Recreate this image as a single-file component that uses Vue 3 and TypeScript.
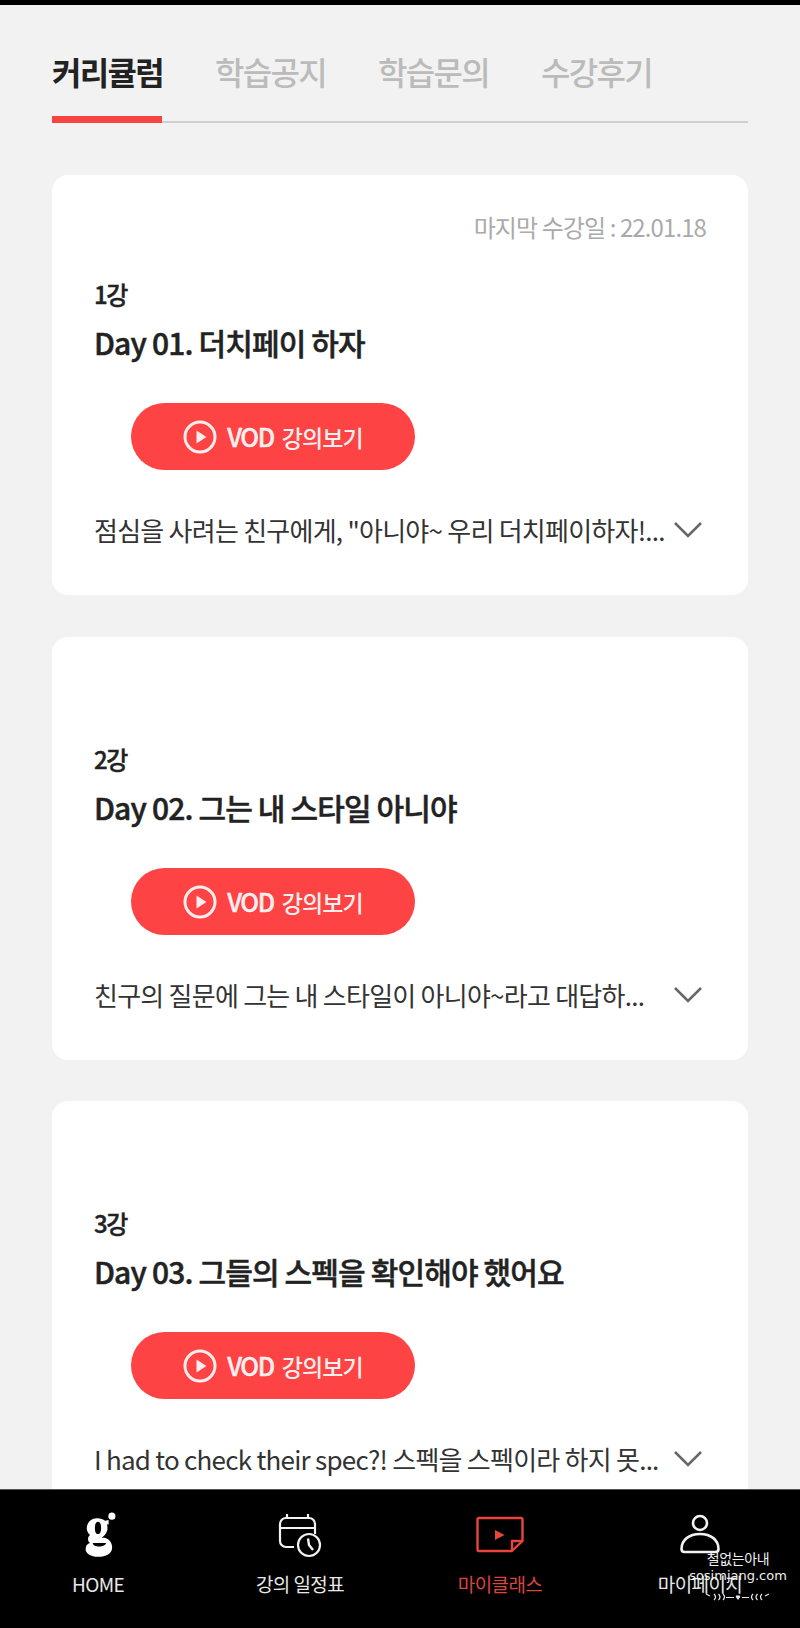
<script setup lang="ts">
import { ref } from 'vue';

interface Lesson {
  no: string;
  title: string;
  desc: string;
  lastDate?: string;
}

const tabs = ['커리큘럼', '학습공지', '학습문의', '수강후기'];
const currentTab = ref<number>(0);

const lessons: Lesson[] = [
  { no: '1강', title: 'Day 01. 더치페이 하자', desc: '점심을 사려는 친구에게, "아니야~ 우리 더치페이하자!...', lastDate: '마지막 수강일 : 22.01.18' },
  { no: '2강', title: 'Day 02. 그는 내 스타일 아니야', desc: '친구의 질문에 그는 내 스타일이 아니야~라고 대답하...' },
  { no: '3강', title: 'Day 03. 그들의 스펙을 확인해야 했어요', desc: 'I had to check their spec?! 스펙을 스펙이라 하지 못...' },
];
</script>

<template>
  <div class="page">
    <div class="topbar"></div>

    <nav class="tabs">
      <button
        v-for="(tab, index) in tabs"
        :key="tab"
        :class="{ tab: true, 'is-current': index === currentTab }"
        @click="currentTab = index"
      >{{ tab }}</button>
    </nav>

    <main class="list">
      <article v-for="lesson in lessons" :key="lesson.no" class="card">
        <p class="last-date">{{ lesson.lastDate }}</p>
        <p class="no">{{ lesson.no }}</p>
        <h2 class="title">{{ lesson.title }}</h2>
        <button class="vod">
          <svg width="34" height="34" viewBox="0 0 34 34" fill="none">
            <circle cx="17" cy="17" r="15" stroke="#fff" stroke-opacity="0.9" stroke-width="3" />
            <path d="M13.500 10.500 23.500 17l-10 6.500z" fill="#fff" fill-opacity="0.9" />
          </svg>
          <span class="vod-text"><b>VOD</b>강의보기</span>
        </button>
        <div class="desc-row">
          <p class="desc">{{ lesson.desc }}</p>
          <svg class="chevron" width="30" height="18" viewBox="0 0 30 18" fill="none">
            <path d="M2 2 15 15 28 2" stroke="#666" stroke-width="2.500" />
          </svg>
        </div>
      </article>
    </main>

    <footer class="bottom-nav">
      <div class="nav-item">
        <div class="nav-icon">
          <svg width="46" height="46" viewBox="3 8 46 52">
            <path
              fill="#fff"
              fill-rule="evenodd"
              d="M25 15C29 15 32 16 34 18L38 17V22H36C37 24 37 28 36 30C35 33 32 36 30 37H33C39 38 42 43 42 48C42 55 35 58.500 26 58.500C18 58.500 12 55 12 50C12 46 14 44 17 43C14 41 14 36 17 34C14.500 32 13.300 29 13.300 26.700C13.300 20 18 15 25 15ZM26 19C23.500 19 22.500 22 22.500 26S23.500 33 26 33S29.500 30 29.500 26S28.500 19 26 19ZM20 43H35C35 45.500 31 47 27.500 47C23.500 47 20.500 46 20 43Z"
            />
            <circle cx="41.700" cy="12.700" r="4" fill="#fff" />
          </svg>
        </div>
        <span>HOME</span>
      </div>
      <div class="nav-item">
        <div class="nav-icon">
          <svg width="48" height="46" viewBox="0 0 48 46" fill="none" stroke="#f2f2f2" stroke-width="2.200">
            <path d="M18 35H10a6 6 0 0 1-6-6V12a6 6 0 0 1 6-6h23a6 6 0 0 1 6 6v10" />
            <path d="M4 16h35M11 2v4M32 2v4" />
            <circle cx="33" cy="33" r="11" />
            <path d="M32 26.500 33 33 37 38" stroke-width="2.400" />
          </svg>
        </div>
        <span>강의 일정표</span>
      </div>
      <div class="nav-item is-current">
        <div class="nav-icon">
          <svg width="48" height="46" viewBox="0 0 48 46" fill="none" stroke="#e8453f" stroke-width="2.400" stroke-linejoin="round">
            <path d="M3 6h42a1.500 1.500 0 0 1 1.500 1.500V29L36 39H3a1.500 1.500 0 0 1-1.500-1.500V7.500A1.500 1.500 0 0 1 3 6z" />
            <path d="M36 39V29h10.500" />
            <path d="M19 18 28.500 23 19 28z" fill="#e8453f" stroke="none" />
          </svg>
        </div>
        <span>마이클래스</span>
      </div>
      <div class="nav-item">
        <div class="nav-icon">
          <svg width="46" height="44" viewBox="0 0 46 44" fill="none" stroke="#f2f2f2" stroke-width="2.600">
            <circle cx="23" cy="10" r="7" />
            <path d="M4.500 36C4.500 27 12 21 23 21s18.500 6 18.500 15c0 2-1 3-3 3H7.500c-2 0-3-1-3-3z" />
          </svg>
        </div>
        <span>마이페이지</span>
      </div>

      <div class="watermark">
        <p class="wm-name">철없는아내</p>
        <p class="wm-url">sosimjang.com</p>
        <svg class="wm-deco" width="66" height="10" viewBox="0 0 66 10" fill="none" stroke="#e8e8e8" stroke-width="1.200">
          <path d="M1 2 5 4M9 2q3 3 0 6M13.500 2q3 3 0 6M18 2q3 3 0 6M21 5.500H29M37 5.500H44M48 2q-3 3 0 6M52.500 2q-3 3 0 6M57 2q-3 3 0 6M60 4 64 2" />
          <path d="M33 8 30.800 5a1.300 1.300 0 0 1 2.200-1.200A1.300 1.300 0 0 1 35.200 5z" fill="#e8e8e8" stroke="none" />
        </svg>
      </div>
    </footer>
  </div>
</template>

<style scoped>
.page {
  position: relative;
  width: 800px;
  height: 1628px;
  overflow: hidden;
  background: #f2f2f2;
  font-family: "Noto Sans CJK KR", "Noto Sans", sans-serif;
  color: #222;
}

.topbar {
  height: 5px;
  background: #000;
}

.tabs {
  display: flex;
  gap: 53px;
  margin: 45px 52px 0;
  height: 71px;
  border-bottom: 2px solid #cfcfcf;
}

.tab {
  position: relative;
  padding: 0 0 4px;
  border: 0;
  background: none;
  height: 46px;
  width: 110px;
  font: inherit;
  font-size: 32px;
  line-height: 42px;
  font-weight: 500;
  letter-spacing: -1.700px;
  color: #bbb;
  white-space: nowrap;
  text-align: left;
  cursor: pointer;
}

.tab.is-current {
  color: #222;
  font-weight: 700;
}

.tab.is-current::after {
  content: '';
  position: absolute;
  left: 0;
  right: 0;
  top: 66px;
  height: 7px;
  background: #f84343;
}

.list {
  display: flex;
  flex-direction: column;
  gap: 42px;
  margin: 52px 52px 0;
}

.card {
  box-sizing: border-box;
  height: 420px;
  padding: 38px 42px 0;
  background: #fff;
  border-radius: 16px;
}

.card:nth-child(1) {
  padding-top: 35px;
}

.card:nth-child(2) {
  height: 423px;
  margin-bottom: -1px;
}

.last-date {
  margin: 0;
  height: 36px;
  font-size: 24px;
  line-height: 34px;
  letter-spacing: -0.900px;
  color: #aaa;
  text-align: right;
}

.no {
  margin: 31px 0 0;
  font-size: 24px;
  line-height: 34px;
  font-weight: 500;
  letter-spacing: -1.500px;
  color: #222;
  -webkit-text-stroke: 0.4px #222;
}

.title {
  margin: 9px 0 0;
  font-size: 30px;
  line-height: 44px;
  font-weight: 500;
  letter-spacing: -0.850px;
  color: #222;
  -webkit-text-stroke: 0.5px #222;
}

.vod {
  display: flex;
  align-items: center;
  justify-content: center;
  gap: 10px;
  width: 284px;
  height: 67px;
  margin: 39px 0 0 37px;
  padding: 0 0 2px;
  border: 0;
  border-radius: 34px;
  background: #fd4343;
  color: #fff;
  font: inherit;
  cursor: pointer;
}

.vod svg {
  margin-top: 2px;
}

.vod-text {
  font-size: 23px;
  font-weight: 500;
  letter-spacing: -0.900px;
  color: #f8f0f0;
}

.vod-text b {
  margin-right: 8px;
  font-size: 25px;
  font-weight: 500;
  letter-spacing: -1.500px;
  -webkit-text-stroke: 0.4px #f8f0f0;
}

.desc-row {
  display: flex;
  align-items: center;
  justify-content: space-between;
  margin-top: 40px;
}

.desc {
  margin: 0;
  font-size: 26px;
  line-height: 40px;
  letter-spacing: -0.750px;
  color: #333;
  white-space: nowrap;
}

.chevron {
  flex: none;
  margin-right: 3px;
}

.bottom-nav {
  position: absolute;
  left: 0;
  right: 0;
  bottom: 0;
  height: 139px;
  display: grid;
  grid-template-columns: repeat(4, 1fr);
  background: #000;
  border-top: 1px solid #555;
  box-sizing: border-box;
}

.nav-item {
  display: flex;
  flex-direction: column;
  align-items: center;
  padding-top: 22px;
  color: #e8e8e8;
  font-size: 19px;
  line-height: 28px;
  letter-spacing: -0.600px;
}

.nav-item:nth-child(1) {
  margin-left: -4px;
}

.nav-item.is-current {
  color: #d9453f;
}

.nav-icon {
  height: 46px;
  display: flex;
  align-items: center;
  justify-content: center;
  margin-bottom: 12px;
}

.watermark {
  position: absolute;
  left: 678px;
  top: 58px;
  width: 120px;
  text-align: center;
  color: #f0f0f0;
}

.wm-name {
  margin: 0;
  font-size: 14px;
  line-height: 20px;
  letter-spacing: -0.400px;
}

.wm-url {
  margin: -2px 0 0;
  font-family: "DejaVu Sans", sans-serif;
  font-size: 13px;
  line-height: 20px;
}

.wm-deco {
  display: block;
  margin: 6px auto 0;
}
</style>
